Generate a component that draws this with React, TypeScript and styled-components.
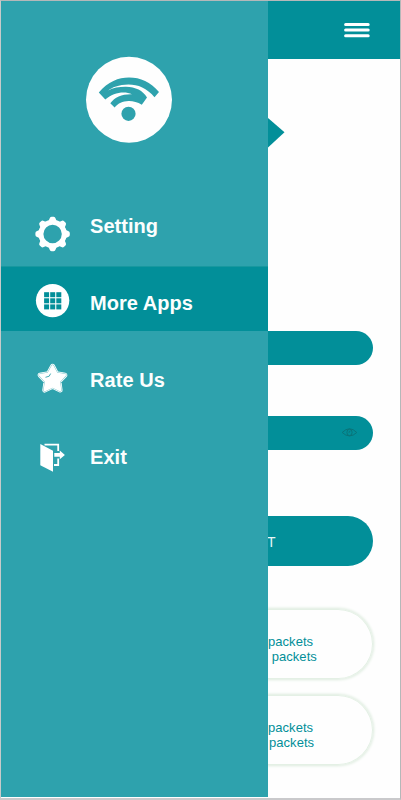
import React from 'react';
import styled, { createGlobalStyle } from 'styled-components';

const deep = '#028f99';
const teal = '#2ea2ad';

const GlobalStyle = createGlobalStyle`
  * { box-sizing: border-box; }
  body { margin: 0; background: #fefefe; font-family: "Liberation Sans", Arial, sans-serif; }
`;

const Screen = styled.div`
  width: 401px;
  height: 800px;
  display: grid;
  grid-template-columns: 267px 1fr;
  background: #fefefe;
  border: 1px solid #b5b8b9;
  border-left-color: #c8caca;
  border-bottom: 2px solid #c9c9cb;
  overflow: hidden;
`;

const Drawer = styled.aside`
  height: 795.5px;
  background: ${teal};
  display: flex;
  flex-direction: column;
`;

const Logo = styled.svg`
  width: 88px;
  height: 88px;
  margin: 55px 0 0 84px;
  flex: none;
`;

const Menu = styled.nav`
  display: flex;
  flex-direction: column;
  gap: 12px;
  margin-top: 45px;
`;

const MenuItem = styled.div<{ $active?: boolean }>`
  height: 65px;
  display: grid;
  grid-template-columns: 38px 1fr;
  column-gap: 18px;
  align-items: start;
  padding-left: 33px;
  background: ${(p) => (p.$active ? `linear-gradient(#18989f 1px, ${deep} 1px)` : 'transparent')};
`;

const Icon = styled.svg<{ $top: number }>`
  width: 38px;
  height: 38px;
  margin-top: ${(p) => p.$top}px;
`;

const Label = styled.span`
  margin-top: 25px;
  font-size: 20px;
  line-height: 24px;
  font-weight: 700;
  letter-spacing: 0.05px;
  color: #fbfefe;
  white-space: nowrap;
`;

const Page = styled.main`
  min-width: 0;
  display: flex;
  flex-direction: column;
  overflow: hidden;
`;

const Header = styled.header`
  height: 58.4px;
  flex: none;
  background: ${deep};
  display: flex;
  justify-content: flex-end;
  padding: 20px 30px 0 0;
`;

const MenuIcon = styled.svg`
  width: 26px;
  height: 18px;
`;

const Arrow = styled.svg`
  width: 17px;
  height: 30px;
  flex: none;
  margin-top: 58.6px;
`;

const Pill = styled.div<{ $height: number; $top: number }>`
  height: ${(p) => p.$height}px;
  flex: none;
  margin: ${(p) => p.$top}px 27.5px 0 0;
  border-radius: 0 100px 100px 0;
  background: ${deep};
  display: flex;
  align-items: center;
  justify-content: flex-end;
  padding-right: 15px;
`;

const Eye = styled.svg`
  width: 17px;
  height: 11px;
  margin-top: -1px;
`;

const Connect = styled(Pill)`
  justify-content: flex-start;
  padding: 1px 0 0;
  color: #e6f6f7;
  font-size: 14px;
`;

const ButtonText = styled.span`
  margin-left: -1px;
`;

const Card = styled.section<{ $height: number; $top: number }>`
  height: ${(p) => p.$height}px;
  flex: none;
  margin: ${(p) => p.$top}px 27px 0 0;
  padding-top: 24px;
  border: 1px solid #e4f0e5;
  border-left: 0;
  border-radius: 0 40px 40px 0;
  box-shadow: 0 0 3px 1px #dcebdd;
`;

const Stat = styled.div<{ $indent: number }>`
  padding-left: ${(p) => p.$indent}px;
  font-size: 13px;
  line-height: 15px;
  letter-spacing: 0.05px;
  color: ${deep};
`;

const teeth = [0, 45, 90, 135, 180, 225, 270, 315];
const cells = [10.1, 16.2, 22.3];
const starPath =
  'M18.6 6.2 L22.5 13.6 L31 15.1 L25 21.4 L26.2 30.2 L18.6 26.4 L10.7 30.2 L12 21.4 L6 15.1 L14.5 13.6Z';

function WifiLogo() {
  return (
    <Logo viewBox="85 56 88 88">
      <circle cx="129" cy="99.7" r="43" fill="#fefefe" />
      <g fill={teal}>
        <path d="M98.8 92.5 C108 81.5 118.5 77.5 129 77.5 C140.5 77.5 150.5 82 159 92 L154.5 97.2 C147 88 138 84.4 128.5 84.4 C119 84.4 111.5 87.5 108 90.5 C113 87.6 120 86.6 126 86.7 C135.5 86.9 143 90.5 147 97.5 L141.8 104.8 C137.5 101.9 133 100.8 128.5 100.9 C122.5 101 118.3 103 114.6 107.6 L110.3 103.2 C115 97.2 122 94 132 94.3 C124.5 90.8 113 92.5 105.3 99.6 Z" />
        <circle cx="128.5" cy="113.8" r="7.1" />
      </g>
    </Logo>
  );
}

export default function App() {
  return (
    <>
      <GlobalStyle />
      <Screen>
        <Drawer>
          <WifiLogo />
          <Menu>
            <MenuItem>
              <Icon $top={26} viewBox="0 0 38 38" fill="#fff">
                <circle cx="18.6" cy="19" r="11.7" fill="none" stroke="#fff" strokeWidth="5" />
                {teeth.map((angle) => (
                  <path
                    key={angle}
                    transform={`rotate(${angle} 18.6 19)`}
                    d="M14.2 7 L15.6 3.5 Q16 1.8 17.6 1.8 H19.6 Q21.2 1.8 21.6 3.5 L23 7Z"
                  />
                ))}
              </Icon>
              <Label>Setting</Label>
            </MenuItem>
            <MenuItem $active>
              <Icon $top={15} viewBox="0 0 38 38">
                <circle cx="18.6" cy="19.6" r="16.7" fill="#fff" />
                {cells.map((y) =>
                  cells.map((x) => (
                    <rect key={`${x}-${y}`} x={x} y={y + 1.1} width="5" height="5" fill={deep} />
                  )),
                )}
              </Icon>
              <Label>More Apps</Label>
            </MenuItem>
            <MenuItem>
              <Icon $top={17} viewBox="0 0 38 38" strokeLinejoin="round">
                <path d={starPath} fill="#fff" stroke="#fff" strokeWidth="4.8" />
                <path d={starPath} fill="none" stroke="#82c8ce" strokeWidth="3.2" />
                <path d={starPath} fill="#fff" stroke="#fff" strokeWidth="2.2" />
                <path d="M11.5 17.3 L15.2 16.2 L16.6 13.6" fill="none" stroke={teal} strokeWidth="0.9" />
              </Icon>
              <Label>Rate Us</Label>
            </MenuItem>
            <MenuItem>
              <Icon $top={19} viewBox="0 0 38 38">
                <path d="M6.3 5 L19 11.8 V32.7 L6.3 26.3Z" fill="#fff" />
                <path d="M10.5 5.6 H24.2 V12" fill="none" stroke="#fff" strokeWidth="1.8" />
                <path d="M20 26 H24.2 V19.5" fill="none" stroke="#fff" strokeWidth="1.8" />
                <path d="M20.3 14.1 H25.8 V11.6 L30.9 15.9 L25.8 20.2 V17.7 H20.3Z" fill="#fff" />
              </Icon>
              <Label>Exit</Label>
            </MenuItem>
          </Menu>
        </Drawer>
        <Page>
          <Header>
            <MenuIcon viewBox="0 0 26 18">
              <path d="M1.6 3.4H24.2M1.6 9.1H24.2M1.6 14.8H24.2" stroke="#fff" strokeWidth="3" strokeLinecap="round" />
            </MenuIcon>
          </Header>
          <Arrow viewBox="0 0 17 30">
            <path d="M0 0 L16.5 14.2 L0 29.5Z" fill={deep} />
          </Arrow>
          <Pill $height={34} $top={183.4} />
          <Pill $height={34} $top={50.4}>
            <Eye viewBox="0 0 17 11" fill="none" stroke="#0a7479" strokeWidth="1">
              <path d="M1.2 5.5 Q8.5 -2 15.8 5.5 Q8.5 12.4 1.2 5.5Z" />
              <ellipse cx="8.5" cy="5.4" rx="2.6" ry="3.2" />
              <path d="M8 5.8 Q8 3.8 9.5 4" />
            </Eye>
          </Pill>
          <Connect $height={50} $top={66.7}>
            <ButtonText>T</ButtonText>
          </Connect>
          <Card $height={70} $top={43}>
            <Stat $indent={0}>packets</Stat>
            <Stat $indent={3.7}>packets</Stat>
          </Card>
          <Card $height={70} $top={16}>
            <Stat $indent={0}>packets</Stat>
            <Stat $indent={1}>packets</Stat>
          </Card>
        </Page>
      </Screen>
    </>
  );
}
